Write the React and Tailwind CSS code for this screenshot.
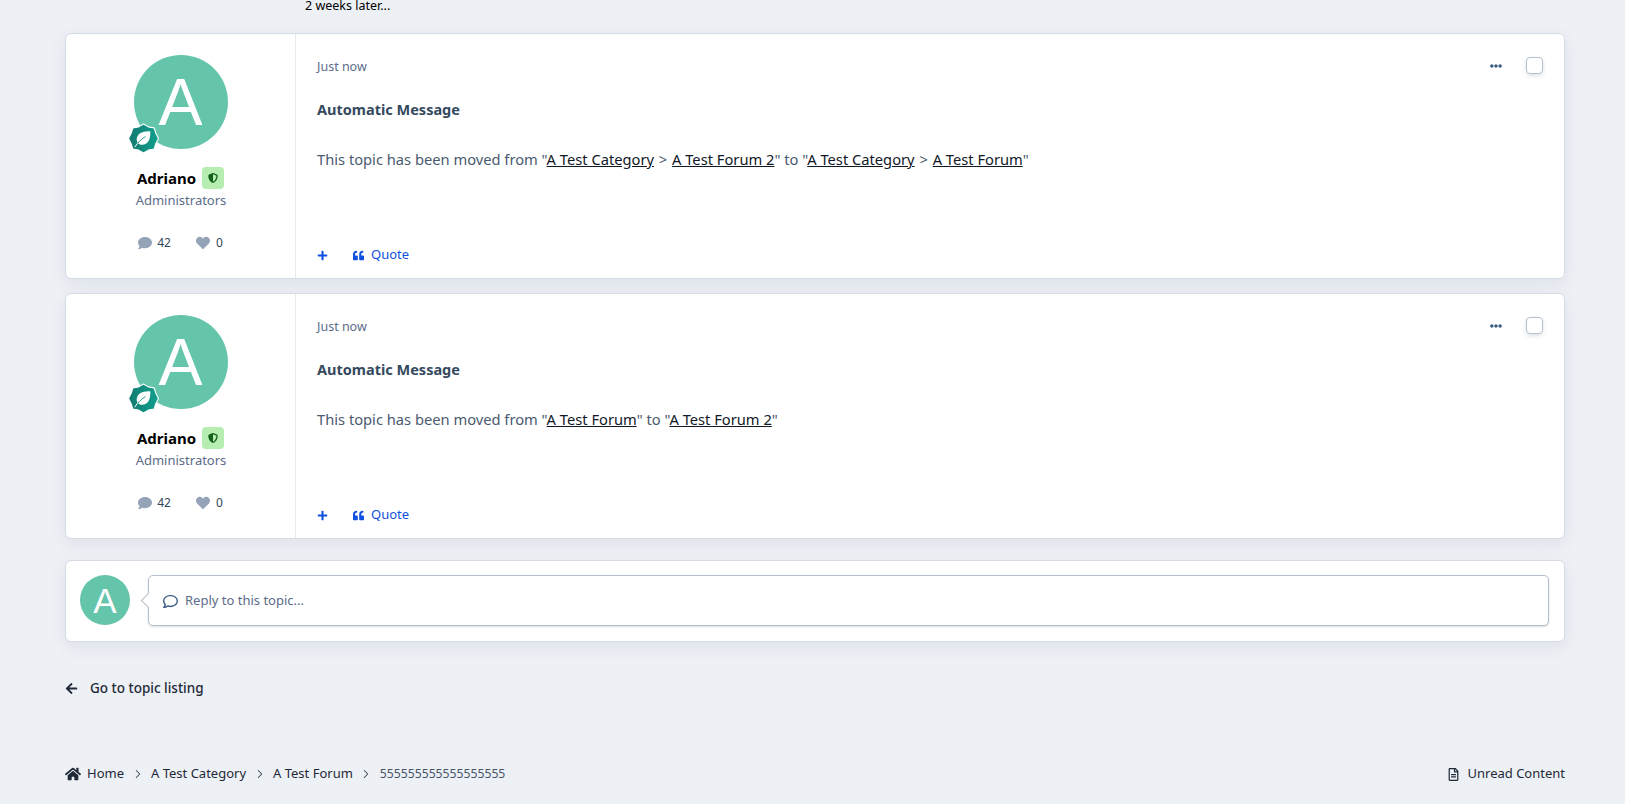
import React from "react";
import {
  FaComment,
  FaHeart,
  FaPlus,
  FaQuoteLeft,
  FaHome,
  FaArrowLeft,
  FaRegComment,
  FaRegFileAlt,
  FaEllipsisH,
} from "react-icons/fa";
import { FaShieldHalved } from "react-icons/fa6";
import { ChevronRight } from "lucide-react";

const FONT = { fontFamily: '"Noto Sans", "Open Sans", sans-serif' };

function A({ children }) {
  return <a className="text-[#111827] underline">{children}</a>;
}

function Gt() {
  return <span className="mx-[1px]">&gt;</span>;
}

function RankBadge() {
  return (
    <svg viewBox="0 0 32 32" className="absolute left-[-6px] bottom-[-5px] w-[31px] h-[31px]">
      <defs>
        <linearGradient id="rank" x1="0" y1="0" x2="1" y2="0">
          <stop offset="0" stopColor="#137a70" />
          <stop offset="1" stopColor="#10a08d" />
        </linearGradient>
      </defs>
      <path
        d="M16 1 L21 4 L27 5 L28.5 10 L31.5 16 L28.5 22 L27 27 L21 28 L16 31 L11 28 L5 27 L3.5 22 L.5 16 L3.5 10 L5 5 L11 4 Z"
        fill="url(#rank)"
        stroke="#fff"
        strokeWidth="1.2"
        strokeLinejoin="round"
      />
      <path d="M23 8.5 C15 8 9 11 9 17 C9 20.5 11.5 22.5 14.5 22.5 C20.5 22.5 23.5 17 23 8.5Z" fill="#fff" />
      <path d="M7 25 C10 20 13 17 18 14" fill="none" stroke="#fff" strokeWidth="1" />
      <path d="M10 21 C12.5 18 15 16 18 14" fill="none" stroke="#1a9484" strokeWidth="1" />
    </svg>
  );
}

function Post({ children }) {
  return (
    <article className="flex h-[246px] bg-white border border-[#d5dbe5] rounded-[6px] shadow-[0_5px_15px_rgba(100,116,139,0.1)]">
      <aside className="w-[230px] shrink-0 border-r border-[#e5e9f0] flex flex-col items-center pt-[21px]">
        <div className="relative w-[94px] h-[94px] rounded-full bg-[#64c5ab] flex items-center justify-center">
          <span className="text-white text-[66px] leading-none" style={{ fontFamily: '"Liberation Sans", sans-serif' }}>A</span>
          <RankBadge />
        </div>
        <div className="flex items-center gap-[6px] mt-[18px] h-[22px] w-full justify-center">
          <span className="font-bold text-[15px] text-black">Adriano</span>
          <span className="w-[22px] h-[22px] rounded-[4px] bg-[#b5eeb0] flex items-center justify-center">
            <FaShieldHalved size={10} color="#14601a" />
          </span>
        </div>
        <div className="text-[13px] leading-[20px] text-[#5c6c8a] mt-[1px] pl-[1px]">Administrators</div>
        <div className="flex items-center mt-[23px] text-[12px] text-[#33475b] h-[20px]">
          <FaComment size={14} color="#94a3b8" />
          <span className="ml-[5px]">42</span>
          <FaHeart size={14} color="#94a3b8" className="ml-[25px]" />
          <span className="ml-[6px]">0</span>
        </div>
      </aside>
      <div className="flex-1 flex flex-col px-[21px]">
        <div className="flex items-center justify-between h-[20px] mt-[22px]">
          <span className="text-[12.5px] text-[#5c6c8a] pt-[2px]">Just now</span>
          <div className="flex items-center">
            <FaEllipsisH size={12} color="#3a5a82" />
            <span className="ml-[24px] w-[17px] h-[17px] mb-[2px] rounded-[4px] border border-[#b6bfcc] shadow-[0_2px_4px_rgba(100,116,139,0.2)]" />
          </div>
        </div>
        <h3 className="font-bold text-[14.5px] leading-[20px] text-[#34495e] mt-[23px]">Automatic Message</h3>
        <p className="text-[14.7px] leading-[22px] text-[#4a5a70] mt-[29px]">{children}</p>
        <div className="mt-auto mb-[13px] flex items-center h-[20px] text-[13px] text-[#0f50e0]">
          <FaPlus size={11} />
          <FaQuoteLeft size={11} className="ml-[25px]" />
          <span className="ml-[7px]">Quote</span>
        </div>
      </div>
    </article>
  );
}

export default function App() {
  return (
    <div className="min-h-[804px] bg-[#edf0f5] pl-[65px] pr-[60px] overflow-hidden" style={FONT}>
      <div className="pl-[240px] text-[12.5px] leading-[12px] text-black">2 weeks later...</div>
      <div className="mt-[21px] flex flex-col gap-[14px]">
        <Post>
          This topic has been moved from "<A>A Test Category</A> <Gt /> <A>A Test Forum 2</A>" to "<A>A Test Category</A> <Gt /> <A>A Test Forum</A>"
        </Post>
        <Post>
          This topic has been moved from "<A>A Test Forum</A>" to "<A>A Test Forum 2</A>"
        </Post>
      </div>

      <section className="mt-[21px] h-[82px] flex items-center bg-white border border-[#d5dbe5] rounded-[6px] pl-[14px] pr-[15px] pb-[2px] shadow-[0_5px_15px_rgba(100,116,139,0.1)]">
        <div className="w-[50px] h-[50px] shrink-0 rounded-full bg-[#64c5ab] flex items-center justify-center">
          <span className="text-white text-[35px] leading-none" style={{ fontFamily: '"Liberation Sans", sans-serif' }}>A</span>
        </div>
        <div className="relative flex-1 ml-[18px] h-[51px] flex items-center bg-white border border-[#b6bfcc] rounded-[5px] px-[14px] pt-[2px] text-[13px] text-[#5c6c8a] shadow-[0_1px_2px_rgba(100,116,139,0.25)]">
          <span className="absolute left-[-6px] top-[19px] w-[11px] h-[11px] rotate-45 bg-white border-l border-b border-[#b6bfcc]" />
          <FaRegComment size={15} color="#3f5f88" />
          <span className="ml-[7px]">Reply to this topic...</span>
        </div>
      </section>

      <div className="mt-[36px] flex items-center h-[20px] text-[13.5px] font-medium text-[#1f2937]">
        <FaArrowLeft size={13} />
        <span className="ml-[12px]">Go to topic listing</span>
      </div>

      <nav className="mt-[66px] flex items-center justify-between h-[20px] text-[13px] text-[#1f2937]">
        <div className="flex items-center">
          <FaHome size={16} />
          <span className="ml-[6px]">Home</span>
          <ChevronRight size={14} strokeWidth={1.75} className="mx-[6.5px] text-[#374151]" />
          <span>A Test Category</span>
          <ChevronRight size={14} strokeWidth={1.75} className="mx-[6.5px] text-[#374151]" />
          <span>A Test Forum</span>
          <ChevronRight size={14} strokeWidth={1.75} className="mx-[6.5px] text-[#374151]" />
          <span className="text-[12.2px] text-[#475569]">555555555555555555</span>
        </div>
        <div className="flex items-center">
          <FaRegFileAlt size={13} />
          <span className="ml-[7px]">Unread Content</span>
        </div>
      </nav>
    </div>
  );
}
